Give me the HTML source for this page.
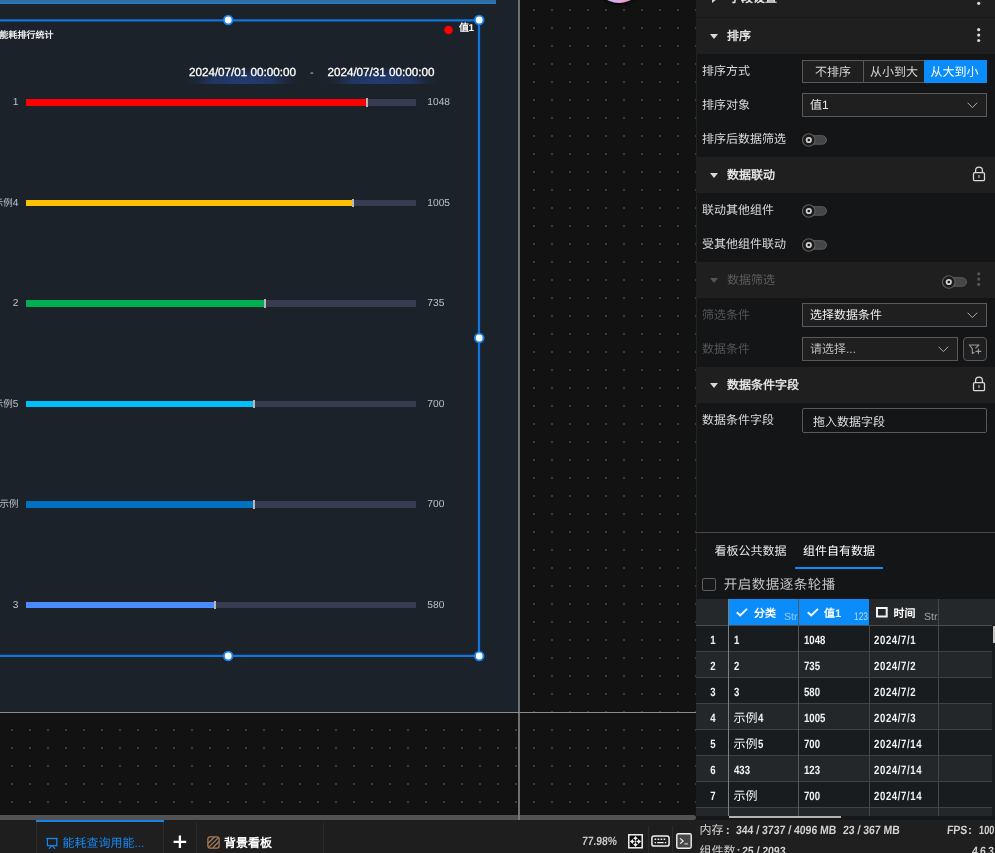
<!DOCTYPE html>
<html lang="zh-CN">
<head>
<meta charset="utf-8">
<title>dashboard editor</title>
<style>
*{box-sizing:border-box;margin:0;padding:0}
html,body{width:995px;height:853px;overflow:hidden;background:#121212}
body{position:relative;font-family:"Liberation Sans",sans-serif;font-size:12px;color:#d9d9d9;line-height:1;text-rendering:geometricPrecision}
body>div{will-change:transform}
.a{position:absolute}
.t{position:absolute;white-space:nowrap}
/* ---------- canvas ---------- */
#canvas{left:0;top:0;width:696px;height:815px;background:#121212;overflow:hidden}
#board{left:-200px;top:0;width:718px;height:711.7px;background:#1b2229}
#topbar{left:0;top:0;width:496px;height:4px;background:linear-gradient(180deg,#2a6aa4 0%,#2f7ab6 100%)}
#vline{left:518px;top:0;width:2px;height:815px;background:#6f6f6f}
#hline{left:0;top:711.7px;width:696px;height:1.5px;background:#8c8c8c}
.bar{position:absolute;left:26px;width:390px;height:6.7px;background:#383c50}
.bar i{position:absolute;left:0;top:0;height:100%;display:block}
.bar b{position:absolute;top:-0.8px;width:2px;height:8.4px;background:#bab6b8;display:block}
.lab{position:absolute;right:677.5px;font-size:9.5px;color:#bcc0cc;white-space:nowrap;line-height:12px}
.lab b{font-weight:normal;font-size:10.2px}
.val{position:absolute;left:427.3px;font-size:10.2px;color:#bcc0cc;white-space:nowrap;line-height:12px}
.hd{position:absolute;width:10px;height:10px;border-radius:50%;background:#fff;border:1.6px solid #1677e0}
.date{position:absolute;top:62px;height:22px;line-height:21px;font-size:11.7px;color:#fff;text-align:center;white-space:nowrap;
 -webkit-text-stroke:0.3px #fff;background:radial-gradient(ellipse 50% 80% at 50% 100%,rgba(36,66,134,.82) 0%,rgba(35,62,124,.66) 55%,rgba(32,52,100,.28) 82%,rgba(30,40,70,0) 100%)}
/* ---------- bottom bar ---------- */
#hscroll{left:0;top:815px;width:696px;height:5px;background:#525254;border-radius:0 2.5px 2.5px 0}
#bbar{left:0;top:820px;width:696px;height:33px;background:#1e1e1e}
/* ---------- right panel ---------- */
#rp{left:696px;top:0;width:299px;height:853px;background:#141517;overflow:hidden;box-shadow:inset 1px 0 0 #232323}
.sh{position:absolute;left:0;width:299px;height:36px;background:#1f1f1f}
.sh .tt{position:absolute;left:31px;top:0;line-height:36.6px;font-size:12px;font-weight:bold;color:#e2e2e2;white-space:nowrap}
.sh .tri{position:absolute;left:14px;top:16px;width:0;height:0;border-left:4px solid transparent;border-right:4px solid transparent;border-top:5.5px solid #d8d8d8}
.lbl{position:absolute;left:6px;line-height:35.4px;height:34px;font-size:12px;color:#dadada;white-space:nowrap}
.box{position:absolute;border:1px solid #595959;background:#1f1f1f}
.tg{position:absolute;width:25px;height:14px}
.tg .tr{position:absolute;left:5px;top:2.5px;width:20px;height:9px;border-radius:5px;background:#454545;border:1px solid #5a5a5a}
.tg .kn{position:absolute;left:0;top:0;width:14px;height:14px;border-radius:50%;background:#191919;border:1px solid #5c5c5c}
.tg .kn:after{content:"";position:absolute;left:2.7px;top:2.7px;width:6.6px;height:6.6px;border-radius:50%;border:2px solid #dcdcdc;background:#111}
.dim{opacity:1}
/* table */
.num{font-weight:bold;font-size:12px;color:#f2f2f2;display:inline-block;transform:scaleX(.80);transform-origin:0 50%}
.numc{transform-origin:50% 50%}
.cn{position:absolute;white-space:nowrap;font-weight:bold;transform:scaleX(.87) skewX(-5deg);transform-origin:0 50%}
.row{position:absolute;left:0;width:296px;height:25px}
.row span{position:absolute;top:2.2px;line-height:25px;white-space:nowrap;color:#f2f2f2}
.vs{position:absolute;width:1px;background:#45484a}
.hs{position:absolute;left:0;width:296px;height:1px;background:#3f4244}
</style>
</head>
<body>

<!-- ================= CANVAS ================= -->
<div id="canvas" class="a">
  <svg class="a" style="left:0;top:0" width="696" height="815">
    <defs><pattern id="dots" x="11" y="9" width="18" height="18" patternUnits="userSpaceOnUse"><rect x="0" y="0" width="2" height="2" fill="#3c3c3c"/></pattern></defs>
    <rect x="0" y="0" width="696" height="815" fill="url(#dots)"/>
  </svg>

  <div id="board" class="a"></div>
  <div id="topbar" class="a"></div>
  <div id="vline" class="a"></div>
  <div id="hline" class="a"></div>

  <!-- pink assistant bubble -->
  <div class="a" style="left:594px;top:-47.5px;width:50px;height:50px;border-radius:50%;background:linear-gradient(90deg,#cdb8f8 15px,#e8a4e2 26px,#f490c6 36px);box-shadow:0 1.5px 3px rgba(0,0,0,.9)"></div>

  <!-- chart title -->
  <div class="t" style="left:-0.5px;top:30px;font-size:9px;font-weight:bold;color:#f0f0f0;line-height:11px">能耗排行统计</div>

  <!-- legend -->
  <div class="t" style="left:459px;top:23.4px;font-size:10px;font-weight:bold;color:#fff;line-height:12px;letter-spacing:-0.6px">值1</div>

  <!-- date range -->
  <div class="date" style="left:186px;width:113px">2024/07/01 00:00:00</div>
  <div class="t" style="left:310px;top:66.5px;font-size:11px;color:#c8ccd4;line-height:12px">-</div>
  <div class="date" style="left:324.5px;width:113px">2024/07/31 00:00:00</div>

  <!-- bars -->
  <div class="bar" style="top:99.2px"><i style="width:340.5px;background:#ff0000"></i><b style="left:340.3px"></b></div>
  <div class="bar" style="top:199.7px"><i style="width:326.5px;background:#ffc000"></i><b style="left:326.3px"></b></div>
  <div class="bar" style="top:300.2px"><i style="width:238.5px;background:#00b050"></i><b style="left:238.4px"></b></div>
  <div class="bar" style="top:400.6px"><i style="width:227.3px;background:#00c0fc"></i><b style="left:227.2px"></b></div>
  <div class="bar" style="top:501.1px"><i style="width:227.3px;background:#0070c0"></i><b style="left:227.2px"></b></div>
  <div class="bar" style="top:601.6px"><i style="width:188.5px;background:#4a8cff"></i><b style="left:188.4px"></b></div>

  <div class="lab" style="top:97.3px"><b>1</b></div>
  <div class="lab" style="top:197.8px">示例<b>4</b></div>
  <div class="lab" style="top:298.3px"><b>2</b></div>
  <div class="lab" style="top:398.7px">示例<b>5</b></div>
  <div class="lab" style="top:499.2px">示例</div>
  <div class="lab" style="top:599.7px"><b>3</b></div>

  <div class="val" style="top:97.3px">1048</div>
  <div class="val" style="top:197.8px">1005</div>
  <div class="val" style="top:298.3px">735</div>
  <div class="val" style="top:398.7px">700</div>
  <div class="val" style="top:499.2px">700</div>
  <div class="val" style="top:599.7px">580</div>

  <!-- selection frame -->
  <svg class="a" style="left:0;top:0" width="520" height="680" fill="none">
    <path d="M-5 20.35 H479 V655.9 H-5" stroke="#1375dc" stroke-width="2.3"/>
    <g fill="#fff" stroke="#1583ee" stroke-width="1.9">
      <circle cx="228.2" cy="20" r="4.35"/><circle cx="479.2" cy="20" r="4.35"/>
      <circle cx="479.2" cy="338" r="4.35"/>
      <circle cx="228.2" cy="656" r="4.35"/><circle cx="479.2" cy="656" r="4.35"/>
    </g>
    <circle cx="448.5" cy="29.9" r="4.25" fill="#ff0000"/>
  </svg>
</div>

<!-- ================= BOTTOM BAR ================= -->
<div id="hscroll" class="a"><div class="a" style="left:518px;top:0;width:2px;height:5px;background:#7a7a7c"></div></div>
<div id="bbar" class="a">
  <!-- active tab -->
  <div class="a" style="left:36px;top:0;width:128px;height:33px;background:#1f1f1f;border-left:1px solid #2b2b2b;border-right:1px solid #2b2b2b;border-top:0"></div>
  <div class="a" style="left:36px;top:0.4px;width:128px;height:1.7px;background:#1484ec"></div>
  <svg class="a" style="left:46px;top:17px" width="12" height="13" viewBox="0 0 12 13" fill="none" stroke="#1488f0" stroke-width="1.2"><path d="M0.1 1.5 H11.7"/><rect x="1.4" y="1.5" width="9.4" height="7.2"/><path d="M5.7 8.9 L3.1 11.8 M6.5 8.9 L9 11.8" stroke-width="1.3"/></svg>
  <div class="t" style="left:62.4px;top:15px;font-size:12px;color:#1686ee;line-height:16px">能耗查询用能...</div>
  <!-- plus -->
  <svg class="a" style="left:173px;top:14.5px" width="14" height="14" viewBox="0 0 14 14" stroke="#fff" stroke-width="2.3" fill="none"><path d="M0.6 6.8 H13.2 M6.9 0.6 V13"/></svg>
  <div class="a" style="left:196px;top:2px;width:1px;height:31px;background:#2b2b2b"></div>
  <!-- bg board tab -->
  <svg class="a" style="left:206.5px;top:15.5px" width="13" height="13" viewBox="0 0 13 13" fill="none" stroke="#a87c58" stroke-width="1.3"><rect x="0.9" y="0.9" width="11.2" height="11.2" rx="2"/><path d="M1.2 7.2 L7.2 1.2 M1.6 11.4 L11.4 1.6 M5.8 11.8 L11.8 5.8"/></svg>
  <div class="t" style="left:224px;top:15px;font-size:12px;font-weight:bold;color:#fff;line-height:16px">背景看板</div>
  <div class="a" style="left:323px;top:2px;width:1px;height:31px;background:#292929"></div>

  <!-- zoom -->
  <div class="cn" style="left:582.3px;top:13.8px;font-size:12px;color:#c8c8c8;line-height:14px;transform:scaleX(.86) skewX(-5deg)">77.98%</div>
  <!-- fit icon -->
  <svg class="a" style="left:628.3px;top:13.5px" width="15" height="15" viewBox="0 0 15 15"><rect x="0.8" y="0.8" width="13.4" height="13" fill="#0b0b0b" stroke="#f2f2f2" stroke-width="1.5"/><path d="M7.5 1.9 L5.1 5 H9.9 Z M7.5 13.1 L5.1 10 H9.9 Z M1.9 7.5 L5 5.1 V9.9 Z M13.1 7.5 L10 5.1 V9.9 Z" fill="#f0f0f0"/><path d="M7.5 5 V10 M5 7.5 H10" stroke="#e8e8e8" stroke-width="1.5" stroke-dasharray="1.2 0.7" fill="none"/></svg>
  <div class="a" style="left:648px;top:6px;width:1px;height:27px;background:#2a2a2a"></div>
  <!-- keyboard icon -->
  <svg class="a" style="left:651px;top:15px" width="19" height="12" viewBox="0 0 19 12" fill="none" stroke="#f0f0f0"><rect x="0.9" y="0.9" width="17.2" height="10.2" rx="2.2" stroke-width="1.5"/><path d="M3.6 4.3 H5.2 M6.6 4.3 H8.2 M9.6 4.3 H11.2 M12.6 4.3 H14.2 M3.6 7.6 H5 M6.2 7.6 H12.6 M13.8 7.6 H15.2" stroke-width="1.4"/></svg>
  <div class="a" style="left:672px;top:6px;width:1px;height:27px;background:#2a2a2a"></div>
  <!-- terminal icon -->
  <svg class="a" style="left:676px;top:13px" width="16" height="16" viewBox="0 0 16 16" fill="none" stroke="#f0f0f0"><rect x="0.8" y="0.8" width="14.4" height="14.4" rx="1.4" fill="#484848" stroke-width="1.4"/><path d="M4.1 5.4 L7.2 8 L4.1 10.6" stroke-width="1.2"/><path d="M8.4 10.9 H11.9" stroke-width="1"/></svg>
</div>

<!-- ================= RIGHT PANEL ================= -->
<div id="rp" class="a">
  <!-- section: 字段设置 (cut) -->
  <div class="sh" style="top:-20.3px;height:37.3px"><div class="tri" style="left:15.5px;top:15.2px;border-top:4px solid transparent;border-bottom:4px solid transparent;border-left:5.5px solid #d8d8d8;border-right:0"></div><div class="tt" style="left:33px">字段设置</div></div>
  <svg class="a" style="left:280px;top:-9.2px" width="6" height="16"><circle cx="2.7" cy="1.6" r="1.6" fill="#d8d8d8"/><circle cx="2.7" cy="7" r="1.6" fill="#d8d8d8"/><circle cx="2.7" cy="12.3" r="1.6" fill="#d8d8d8"/></svg>
  <div class="a" style="left:0;top:17px;width:299px;height:1px;background:#191919"></div>

  <!-- section: 排序 -->
  <div class="sh" style="top:18px"><div class="tri"></div><div class="tt">排序</div></div>
  <svg class="a" style="left:280px;top:27.6px" width="6" height="16"><circle cx="2.7" cy="1.7" r="1.6" fill="#d8d8d8"/><circle cx="2.7" cy="7.1" r="1.6" fill="#d8d8d8"/><circle cx="2.7" cy="12.5" r="1.6" fill="#d8d8d8"/></svg>

  <div class="lbl" style="top:54px">排序方式</div>
  <div class="box" style="left:106px;top:60px;width:185px;height:23px"></div>
  <div class="a" style="left:167px;top:60px;width:1px;height:23px;background:#595959"></div>
  <div class="a" style="left:228px;top:60px;width:63px;height:23px;background:#0a8cfa"></div>
  <div class="t" style="left:107px;width:60px;top:60.7px;line-height:23px;text-align:center;color:#d6d6d6">不排序</div>
  <div class="t" style="left:168px;width:60px;top:60.7px;line-height:23px;text-align:center;color:#d6d6d6">从小到大</div>
  <div class="t" style="left:227px;width:63px;top:60.7px;line-height:23px;text-align:center;color:#fff">从大到小</div>

  <div class="lbl" style="top:88px">排序对象</div>
  <div class="box" style="left:106px;top:93px;width:185px;height:24px"></div>
  <div class="t" style="left:114px;top:93px;line-height:24px;color:#e6e6e6">值1</div>
  <svg class="a" style="left:271px;top:102px" width="11" height="7" fill="none" stroke="#ababab" stroke-width="1"><path d="M0.6 0.7 L5.4 5.6 L10.2 0.7"/></svg>

  <div class="lbl" style="top:122px">排序后数据筛选</div>
  <svg class="a" style="left:106px;top:132.8px" width="26" height="14"><rect x="6" y="2.7" width="18.5" height="8.5" rx="4.25" fill="#464646" stroke="#5c5c5c" stroke-width="1"/><circle cx="6.8" cy="7" r="6.3" fill="#1a1a1a" stroke="#606060" stroke-width="1.1"/><circle cx="6.8" cy="7" r="2.2" fill="#141414" stroke="#d0d0d0" stroke-width="1.8"/></svg>

  <!-- section: 数据联动 -->
  <div class="sh" style="top:157px"><div class="tri"></div><div class="tt">数据联动</div></div>
  <svg class="a" style="left:275px;top:165px" width="16" height="18" fill="none" stroke="#dcdcdc" stroke-width="1.25"><rect x="2.5" y="7.7" width="11" height="8" rx="1.3"/><path d="M4.6 7.7 V5.6 A3.4 3.4 0 0 1 11.4 5.6 V7.7"/><path d="M8 10 V13" stroke="#9a9a9a" stroke-width="1.5"/></svg>

  <div class="lbl" style="top:193px">联动其他组件</div>
  <svg class="a" style="left:106px;top:203.8px" width="26" height="14"><rect x="6" y="2.7" width="18.5" height="8.5" rx="4.25" fill="#464646" stroke="#5c5c5c" stroke-width="1"/><circle cx="6.8" cy="7" r="6.3" fill="#1a1a1a" stroke="#606060" stroke-width="1.1"/><circle cx="6.8" cy="7" r="2.2" fill="#141414" stroke="#d0d0d0" stroke-width="1.8"/></svg>
  <div class="lbl" style="top:227px">受其他组件联动</div>
  <svg class="a" style="left:106px;top:237.8px" width="26" height="14"><rect x="6" y="2.7" width="18.5" height="8.5" rx="4.25" fill="#464646" stroke="#5c5c5c" stroke-width="1"/><circle cx="6.8" cy="7" r="6.3" fill="#1a1a1a" stroke="#606060" stroke-width="1.1"/><circle cx="6.8" cy="7" r="2.2" fill="#141414" stroke="#d0d0d0" stroke-width="1.8"/></svg>

  <!-- section: 数据筛选 (disabled) -->
  <div class="sh" style="top:262px"><div class="tri" style="border-top-color:#555"></div><div class="tt" style="font-weight:normal;color:#5c5c5c">数据筛选</div></div>
  <svg class="a" style="left:246px;top:275px" width="26" height="14"><rect x="6" y="2.7" width="18.5" height="8.5" rx="4.25" fill="#464646" stroke="#5c5c5c" stroke-width="1"/><circle cx="6.8" cy="7" r="6.3" fill="#1a1a1a" stroke="#606060" stroke-width="1.1"/><circle cx="6.8" cy="7" r="2.2" fill="#141414" stroke="#d0d0d0" stroke-width="1.8"/></svg>
  <svg class="a" style="left:280px;top:272px" width="6" height="16"><circle cx="2.7" cy="1.8" r="1.6" fill="#565656"/><circle cx="2.7" cy="7.1" r="1.6" fill="#565656"/><circle cx="2.7" cy="12.4" r="1.6" fill="#565656"/></svg>

  <div class="lbl" style="top:298px;color:#555">筛选条件</div>
  <div class="box" style="left:106px;top:303px;width:185px;height:24px"></div>
  <div class="t" style="left:114px;top:303px;line-height:24px;color:#ececec">选择数据条件</div>
  <svg class="a" style="left:271px;top:312px" width="11" height="7" fill="none" stroke="#ababab" stroke-width="1"><path d="M0.6 0.7 L5.4 5.6 L10.2 0.7"/></svg>

  <div class="lbl" style="top:332px;color:#555">数据条件</div>
  <div class="box" style="left:106px;top:337px;width:156px;height:24px"></div>
  <div class="t" style="left:114px;top:337px;line-height:24px;color:#b8b8b8">请选择...</div>
  <svg class="a" style="left:242px;top:346px" width="11" height="7" fill="none" stroke="#ababab" stroke-width="1"><path d="M0.6 0.7 L5.4 5.6 L10.2 0.7"/></svg>
  <div class="box" style="left:267px;top:337px;width:24px;height:24px;border-radius:4px"></div>
  <svg class="a" style="left:267px;top:337px" width="24" height="24" fill="none" stroke="#9c9c9c" stroke-width="1.1" stroke-linecap="round" stroke-linejoin="round"><path d="M9.3 11.6 L6.3 8 H16 L12.8 10.9 M9.3 11.6 V16.4 L11.2 15.6"/><path d="M13 14.4 H17.8 M15.4 12 V16.8"/></svg>

  <!-- section: 数据条件字段 -->
  <div class="sh" style="top:367px"><div class="tri"></div><div class="tt">数据条件字段</div></div>
  <svg class="a" style="left:275px;top:375px" width="16" height="18" fill="none" stroke="#dcdcdc" stroke-width="1.25"><rect x="2.5" y="7.7" width="11" height="8" rx="1.3"/><path d="M4.6 7.7 V5.6 A3.4 3.4 0 0 1 11.4 5.6 V7.7"/><path d="M8 10 V13" stroke="#9a9a9a" stroke-width="1.5"/></svg>

  <div class="lbl" style="top:403px">数据条件字段</div>
  <div class="box" style="left:106px;top:408px;width:185px;height:24.5px;background:transparent;border-radius:2px"></div>
  <div class="t" style="left:117px;top:409.5px;line-height:24px;color:#dedede">拖入数据字段</div>

  <!-- divider + tabs -->
  <div class="a" style="left:0;top:532px;width:299px;height:1px;background:#4a4a4a"></div>
  <div class="t" style="left:18.5px;top:539px;line-height:24px;color:#e4e4e4">看板公共数据</div>
  <div class="t" style="left:107px;top:539px;line-height:24px;color:#fff">组件自有数据</div>
  <div class="a" style="left:99px;top:566.8px;width:88px;height:2.3px;background:#0a8cfa"></div>

  <!-- checkbox -->
  <div class="a" style="left:6px;top:577.5px;width:14px;height:13.5px;border:1px solid #5e5e5e;border-radius:2px;background:#17181a"></div>
  <div class="t" style="left:27.7px;top:574px;font-size:13.5px;letter-spacing:.5px;line-height:22px;color:#c4c4c4">开启数据逐条轮播</div>

  <!-- table -->
  <div id="tb" class="a" style="left:0;top:599px;width:299px;height:221px;background:#191c1f;overflow:hidden">
    <!-- header -->
    <div class="a" style="left:0;top:0;width:299px;height:26px;background:#25282b"></div>
    <div class="a" style="left:33px;top:0;width:140px;height:26px;background:#0a8cfa"></div>
    <!-- light rows -->
    <div class="a" style="left:0;top:53px;width:296px;height:25px;background:#24272a"></div>
    <div class="a" style="left:0;top:105px;width:296px;height:25px;background:#24272a"></div>
    <div class="a" style="left:0;top:157px;width:296px;height:25px;background:#24272a"></div>
    <div class="a" style="left:0;top:209px;width:296px;height:8px;background:#24272a"></div>
    <!-- h seps -->
    <div class="hs" style="top:26px;background:#4b4e50"></div>
    <div class="hs" style="top:52px"></div><div class="hs" style="top:78px"></div><div class="hs" style="top:104px"></div>
    <div class="hs" style="top:130px"></div><div class="hs" style="top:156px"></div><div class="hs" style="top:182px"></div><div class="hs" style="top:208px"></div>
    <!-- v seps -->
    <div class="vs" style="left:32px;top:0;height:217px;background:#7d7f80"></div>
    <div class="vs" style="left:102px;top:0;height:217px;background:#55585a"></div>
    <div class="vs" style="left:172.5px;top:26px;height:191px"></div>
    <div class="vs" style="left:242px;top:0;height:217px"></div>

    <!-- header content -->
    <svg class="a" style="left:40px;top:9px" width="12" height="9" fill="none" stroke="#fff" stroke-width="1.9"><path d="M0.8 4.2 L4.2 7.4 L11 0.9"/></svg>
    <div class="t" style="left:58px;top:8.1px;font-size:11px;font-weight:bold;color:#fff;line-height:14px">分类</div>
    <div class="t" style="left:88px;top:12px;font-size:10.5px;color:#8ecbff;line-height:12px;width:14px;overflow:hidden">Str.</div>
    <svg class="a" style="left:110.5px;top:9px" width="12" height="9" fill="none" stroke="#fff" stroke-width="1.9"><path d="M0.8 4.2 L4.2 7.4 L11 0.9"/></svg>
    <div class="t" style="left:128px;top:8.1px;font-size:11px;font-weight:bold;color:#fff;line-height:14px">值1</div>
    <div class="t" style="left:158.3px;top:11.5px;font-size:11px;color:#b4dcff;line-height:12px;transform:scaleX(.76);transform-origin:0 50%">123</div>
    <svg class="a" style="left:179px;top:7.9px" width="14" height="13"><rect x="2" y="1" width="9.7" height="8.5" fill="none" stroke="#f4f4f4" stroke-width="2"/></svg>
    <div class="t" style="left:197.5px;top:8.1px;font-size:11px;font-weight:bold;color:#fff;line-height:14px">时间</div>
    <div class="t" style="left:228px;top:12px;font-size:10.5px;color:#a0a0a0;line-height:12px;width:14px;overflow:hidden">Str.</div>

    <!-- rows -->
    <div class="row" style="top:27px"><span class="num numc" style="left:1px;width:32px;text-align:center">1</span><span class="num" style="left:37.5px">1</span><span class="num" style="left:107.8px">1048</span><span class="num" style="left:177.6px;letter-spacing:.75px">2024/7/1</span></div>
    <div class="row" style="top:53px"><span class="num numc" style="left:1px;width:32px;text-align:center">2</span><span class="num" style="left:37.5px">2</span><span class="num" style="left:107.8px">735</span><span class="num" style="left:177.6px;letter-spacing:.75px">2024/7/2</span></div>
    <div class="row" style="top:79px"><span class="num numc" style="left:1px;width:32px;text-align:center">3</span><span class="num" style="left:37.5px">3</span><span class="num" style="left:107.8px">580</span><span class="num" style="left:177.6px;letter-spacing:.75px">2024/7/2</span></div>
    <div class="row" style="top:105px"><span class="num numc" style="left:1px;width:32px;text-align:center">4</span><span style="left:37.5px">示例<b class="num">4</b></span><span class="num" style="left:107.8px">1005</span><span class="num" style="left:177.6px;letter-spacing:.75px">2024/7/3</span></div>
    <div class="row" style="top:131px"><span class="num numc" style="left:1px;width:32px;text-align:center">5</span><span style="left:37.5px">示例<b class="num">5</b></span><span class="num" style="left:107.8px">700</span><span class="num" style="left:177.6px;letter-spacing:.75px">2024/7/14</span></div>
    <div class="row" style="top:157px"><span class="num numc" style="left:1px;width:32px;text-align:center">6</span><span class="num" style="left:37.5px">433</span><span class="num" style="left:107.8px">123</span><span class="num" style="left:177.6px;letter-spacing:.75px">2024/7/14</span></div>
    <div class="row" style="top:183px"><span class="num numc" style="left:1px;width:32px;text-align:center">7</span><span style="left:37.5px">示例</span><span class="num" style="left:107.8px">700</span><span class="num" style="left:177.6px;letter-spacing:.75px">2024/7/14</span></div>

    <!-- scrollbars -->
    <div class="a" style="left:296.5px;top:26.5px;width:2.5px;height:17px;background:#c4c4c4"></div>
    <div class="a" style="left:0;top:217px;width:299px;height:4px;background:#15181a"></div>
    <div class="a" style="left:32.5px;top:216.6px;width:112px;height:2.2px;background:#b4b4b4"></div>
  </div>

  <!-- status bar -->
  <div class="a" style="left:0;top:820px;width:299px;height:33px;background:#1f1f1f"></div>
  <div class="t" style="left:3.5px;top:822.4px;line-height:16px;font-size:12px;color:#d2d2d2">内存</div>
  <div class="t" style="left:29.8px;top:822px;line-height:16px;font-size:12px;font-weight:bold;color:#d2d2d2">:</div>
  <div class="cn" style="left:40.2px;top:821.6px;line-height:16px;font-size:12px;color:#d2d2d2">344 / 3737 / 4096 MB</div>
  <div class="cn" style="left:147px;top:821.6px;line-height:16px;font-size:12px;color:#d2d2d2">23 / 367 MB</div>
  <div class="cn" style="left:250.6px;top:821.6px;line-height:16px;font-size:12px;color:#d2d2d2">FPS</div>
  <div class="t" style="left:272px;top:822px;line-height:16px;font-size:12px;font-weight:bold;color:#d2d2d2">:</div>
  <div class="cn" style="left:282.6px;top:821.6px;line-height:16px;font-size:12px;color:#d2d2d2;transform:scaleX(.77) skewX(-4deg)">100</div>
  <div class="t" style="left:3.5px;top:843.4px;line-height:16px;font-size:12px;color:#d2d2d2">组件数</div>
  <div class="t" style="left:40.6px;top:843px;line-height:16px;font-size:12px;font-weight:bold;color:#d2d2d2">:</div>
  <div class="cn" style="left:45.6px;top:842.6px;line-height:16px;font-size:12px;color:#d2d2d2">25 / 2093</div>
  <div class="cn" style="left:275.6px;top:842.8px;line-height:16px;font-size:12px;color:#d2d2d2;letter-spacing:-0.4px">4.6.3</div>
</div>

</body>
</html>
